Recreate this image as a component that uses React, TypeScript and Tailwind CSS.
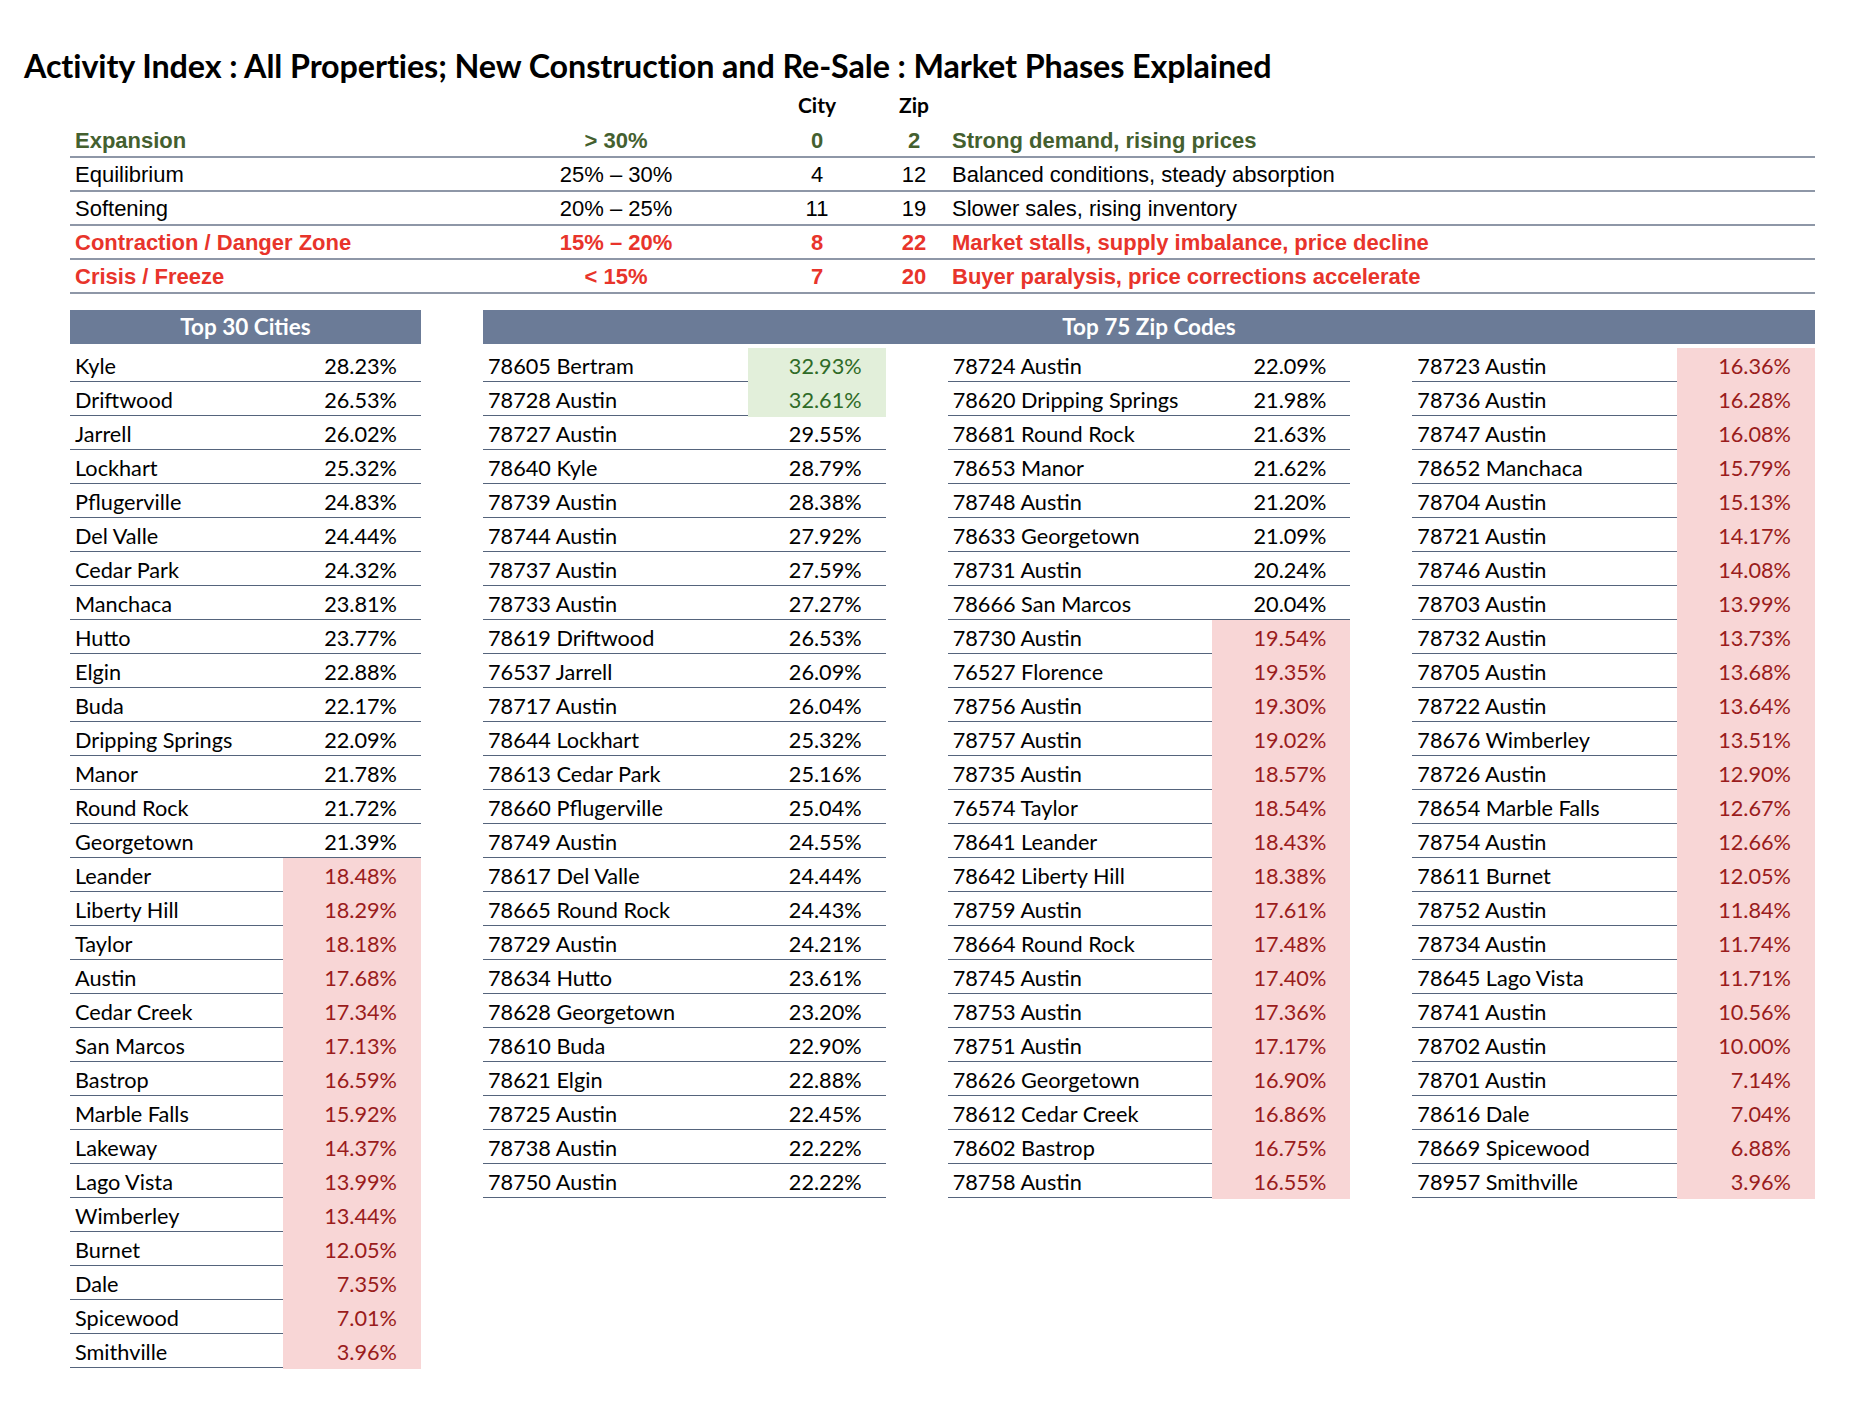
type Row = { name: string; pct: number };

const PHASES = [
  {
    label: "Expansion",
    range: "> 30%",
    city: "0",
    zip: "2",
    desc: "Strong demand, rising prices",
    tone: "font-bold text-[#44602f]",
  },
  {
    label: "Equilibrium",
    range: "25% – 30%",
    city: "4",
    zip: "12",
    desc: "Balanced conditions, steady absorption",
    tone: "text-black",
  },
  {
    label: "Softening",
    range: "20% – 25%",
    city: "11",
    zip: "19",
    desc: "Slower sales, rising inventory",
    tone: "text-black",
  },
  {
    label: "Contraction / Danger Zone",
    range: "15% – 20%",
    city: "8",
    zip: "22",
    desc: "Market stalls, supply imbalance, price decline",
    tone: "font-bold text-[#e8342b]",
  },
  {
    label: "Crisis / Freeze",
    range: "< 15%",
    city: "7",
    zip: "20",
    desc: "Buyer paralysis, price corrections accelerate",
    tone: "font-bold text-[#e8342b]",
  },
];

const CITIES: Row[] = [
  { name: "Kyle", pct: 28.23 },
  { name: "Driftwood", pct: 26.53 },
  { name: "Jarrell", pct: 26.02 },
  { name: "Lockhart", pct: 25.32 },
  { name: "Pflugerville", pct: 24.83 },
  { name: "Del Valle", pct: 24.44 },
  { name: "Cedar Park", pct: 24.32 },
  { name: "Manchaca", pct: 23.81 },
  { name: "Hutto", pct: 23.77 },
  { name: "Elgin", pct: 22.88 },
  { name: "Buda", pct: 22.17 },
  { name: "Dripping Springs", pct: 22.09 },
  { name: "Manor", pct: 21.78 },
  { name: "Round Rock", pct: 21.72 },
  { name: "Georgetown", pct: 21.39 },
  { name: "Leander", pct: 18.48 },
  { name: "Liberty Hill", pct: 18.29 },
  { name: "Taylor", pct: 18.18 },
  { name: "Austin", pct: 17.68 },
  { name: "Cedar Creek", pct: 17.34 },
  { name: "San Marcos", pct: 17.13 },
  { name: "Bastrop", pct: 16.59 },
  { name: "Marble Falls", pct: 15.92 },
  { name: "Lakeway", pct: 14.37 },
  { name: "Lago Vista", pct: 13.99 },
  { name: "Wimberley", pct: 13.44 },
  { name: "Burnet", pct: 12.05 },
  { name: "Dale", pct: 7.35 },
  { name: "Spicewood", pct: 7.01 },
  { name: "Smithville", pct: 3.96 },
];

const ZIPS: Row[][] = [
  [
    { name: "78605 Bertram", pct: 32.93 },
    { name: "78728 Austin", pct: 32.61 },
    { name: "78727 Austin", pct: 29.55 },
    { name: "78640 Kyle", pct: 28.79 },
    { name: "78739 Austin", pct: 28.38 },
    { name: "78744 Austin", pct: 27.92 },
    { name: "78737 Austin", pct: 27.59 },
    { name: "78733 Austin", pct: 27.27 },
    { name: "78619 Driftwood", pct: 26.53 },
    { name: "76537 Jarrell", pct: 26.09 },
    { name: "78717 Austin", pct: 26.04 },
    { name: "78644 Lockhart", pct: 25.32 },
    { name: "78613 Cedar Park", pct: 25.16 },
    { name: "78660 Pflugerville", pct: 25.04 },
    { name: "78749 Austin", pct: 24.55 },
    { name: "78617 Del Valle", pct: 24.44 },
    { name: "78665 Round Rock", pct: 24.43 },
    { name: "78729 Austin", pct: 24.21 },
    { name: "78634 Hutto", pct: 23.61 },
    { name: "78628 Georgetown", pct: 23.2 },
    { name: "78610 Buda", pct: 22.9 },
    { name: "78621 Elgin", pct: 22.88 },
    { name: "78725 Austin", pct: 22.45 },
    { name: "78738 Austin", pct: 22.22 },
    { name: "78750 Austin", pct: 22.22 },
  ],
  [
    { name: "78724 Austin", pct: 22.09 },
    { name: "78620 Dripping Springs", pct: 21.98 },
    { name: "78681 Round Rock", pct: 21.63 },
    { name: "78653 Manor", pct: 21.62 },
    { name: "78748 Austin", pct: 21.2 },
    { name: "78633 Georgetown", pct: 21.09 },
    { name: "78731 Austin", pct: 20.24 },
    { name: "78666 San Marcos", pct: 20.04 },
    { name: "78730 Austin", pct: 19.54 },
    { name: "76527 Florence", pct: 19.35 },
    { name: "78756 Austin", pct: 19.3 },
    { name: "78757 Austin", pct: 19.02 },
    { name: "78735 Austin", pct: 18.57 },
    { name: "76574 Taylor", pct: 18.54 },
    { name: "78641 Leander", pct: 18.43 },
    { name: "78642 Liberty Hill", pct: 18.38 },
    { name: "78759 Austin", pct: 17.61 },
    { name: "78664 Round Rock", pct: 17.48 },
    { name: "78745 Austin", pct: 17.4 },
    { name: "78753 Austin", pct: 17.36 },
    { name: "78751 Austin", pct: 17.17 },
    { name: "78626 Georgetown", pct: 16.9 },
    { name: "78612 Cedar Creek", pct: 16.86 },
    { name: "78602 Bastrop", pct: 16.75 },
    { name: "78758 Austin", pct: 16.55 },
  ],
  [
    { name: "78723 Austin", pct: 16.36 },
    { name: "78736 Austin", pct: 16.28 },
    { name: "78747 Austin", pct: 16.08 },
    { name: "78652 Manchaca", pct: 15.79 },
    { name: "78704 Austin", pct: 15.13 },
    { name: "78721 Austin", pct: 14.17 },
    { name: "78746 Austin", pct: 14.08 },
    { name: "78703 Austin", pct: 13.99 },
    { name: "78732 Austin", pct: 13.73 },
    { name: "78705 Austin", pct: 13.68 },
    { name: "78722 Austin", pct: 13.64 },
    { name: "78676 Wimberley", pct: 13.51 },
    { name: "78726 Austin", pct: 12.9 },
    { name: "78654 Marble Falls", pct: 12.67 },
    { name: "78754 Austin", pct: 12.66 },
    { name: "78611 Burnet", pct: 12.05 },
    { name: "78752 Austin", pct: 11.84 },
    { name: "78734 Austin", pct: 11.74 },
    { name: "78645 Lago Vista", pct: 11.71 },
    { name: "78741 Austin", pct: 10.56 },
    { name: "78702 Austin", pct: 10.0 },
    { name: "78701 Austin", pct: 7.14 },
    { name: "78616 Dale", pct: 7.04 },
    { name: "78669 Spicewood", pct: 6.88 },
    { name: "78957 Smithville", pct: 3.96 },
  ],
];

function pctCell(pct: number) {
  if (pct >= 30) return "bg-[#e2efda] text-[#2f6b27]";
  if (pct < 20) return "bg-[#f8d6d6] text-[#9a1c1c]";
  return "text-black";
}

function DataRows({ rows }: { rows: Row[] }) {
  return (
    <div>
      {rows.map((r) => (
        <div
          key={r.name}
          className="grid h-[34px] grid-cols-[1fr_138px] border-b border-[#55647c]"
        >
          <span className="flex items-center pl-[5px] pt-[2px]">{r.name}</span>
          <span
            className={`flex items-center justify-end pr-[24px] pt-[2px] ${pctCell(r.pct)}`}
          >
            {r.pct.toFixed(2)}%
          </span>
        </div>
      ))}
    </div>
  );
}

function HeaderBar({ title }: { title: string }) {
  return (
    <div className="mb-[4px] flex h-[34px] items-center justify-center bg-[#6b7b97] text-[22.5px] font-bold text-white">
      {title}
    </div>
  );
}

export default function App() {
  return (
    <div className="h-[1408px] w-[1872px] bg-white pt-[46px] text-black [font-family:Lato,'Open_Sans',sans-serif]">
      <h1 className="h-[40px] pl-[24px] text-[32.3px] font-bold leading-[40px] tracking-[-0.1px]">
        Activity Index : All Properties; New Construction and Re-Sale : Market
        Phases Explained
      </h1>

      <div className="ml-[70px] mt-[2px] w-[1745px] text-[22px] [font-family:'Liberation_Sans',Arial,sans-serif]">
        <div className="grid h-[36px] grid-cols-[400px_292px_110px_84px_1fr] items-center pb-[2px] text-[21px] font-bold [font-family:Lato,sans-serif]">
          <span />
          <span />
          <span className="text-center">City</span>
          <span className="text-center">Zip</span>
          <span />
        </div>
        {PHASES.map((p) => (
          <div
            key={p.label}
            className={`grid h-[34px] grid-cols-[400px_292px_110px_84px_1fr] items-center border-b-2 border-[#8e97a7] ${p.tone}`}
          >
            <span className="pl-[5px]">{p.label}</span>
            <span className="text-center">{p.range}</span>
            <span className="text-center">{p.city}</span>
            <span className="text-center">{p.zip}</span>
            <span className="-ml-[4px]">{p.desc}</span>
          </div>
        ))}
      </div>

      <div className="mt-[16px] flex gap-[62px] pl-[70px] text-[21.7px]">
        <div className="w-[351px]">
          <HeaderBar title="Top 30 Cities" />
          <DataRows rows={CITIES} />
        </div>
        <div className="w-[1332px]">
          <HeaderBar title="Top 75 Zip Codes" />
          <div className="grid grid-cols-3 gap-[62px]">
            {ZIPS.map((col, i) => (
              <DataRows key={i} rows={col} />
            ))}
          </div>
        </div>
      </div>
    </div>
  );
}
